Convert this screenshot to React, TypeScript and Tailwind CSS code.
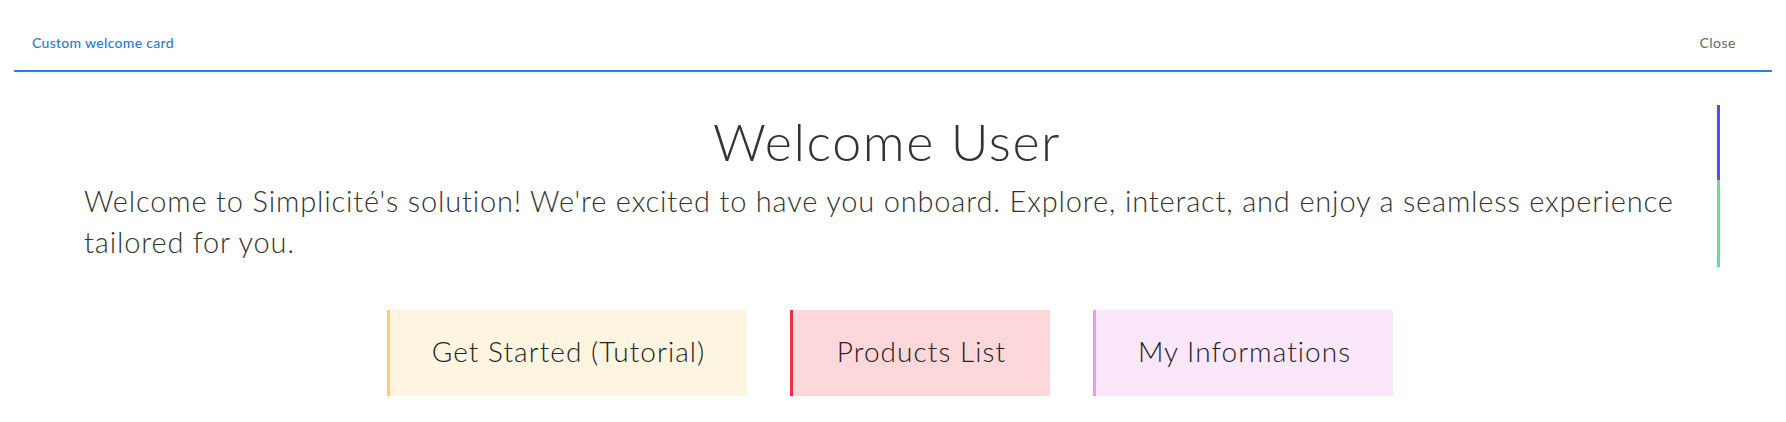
import React from 'react';

const actions = [
  { label: 'Get Started (Tutorial)', cls: 'bg-[#fef5e0] border-[#fecd63] w-[360px]' },
  { label: 'Products List', cls: 'bg-[#fdd7d9] border-[#ee3039] w-[260px]' },
  { label: 'My Informations', cls: 'bg-[#fbe7fa] border-[#e8a0ea] w-[300px]' },
];

const App = () => {
  return (
    <div className="w-full h-[422px] bg-white font-['Lato','Open_Sans',sans-serif] overflow-hidden">
      {/* card header */}
      <div className="mx-[14px] h-[72px] flex items-center justify-between border-b-2 border-[#2a7fd6]">
        <span className="pl-[18px] pt-[14px] text-[14px] tracking-[0.3px] font-medium text-[#2a7ad8]">Custom welcome card</span>
        <span className="pr-[36px] pt-[14px] text-[14px] tracking-[0.5px] text-[#666]">Close</span>
      </div>

      <div className="flex pl-[84px] pr-[66px] pt-[33px]">
        <div className="flex-1 pr-[27px]">
          <h1 className="mt-[5px] text-center text-[52px] leading-[62px] tracking-[1.6px] font-light text-[#333]">Welcome User</h1>
          <p className="pt-[8px] text-[29px] leading-[41px] tracking-[0.83px] font-light text-[#333]">
            Welcome to Simplicité's solution! We're excited to have you onboard. Explore, interact, and enjoy a seamless experience tailored for you.
          </p>
        </div>
        <div className="w-[3px] flex flex-col">
          <div className="h-[75px] bg-[#4f4ff2]" />
          <div className="h-[87px] bg-[#5de397]" />
        </div>
      </div>

      <div className="flex justify-center gap-[43px] pt-[43px] pr-[6px]">
        {actions.map((a) => (
          <div
            key={a.label}
            className={`h-[86px] pb-[4px] border-l-[3px] flex items-center justify-center text-[28px] tracking-[1.05px] font-light text-[#222] ${a.cls}`}
          >
            {a.label}
          </div>
        ))}
      </div>
    </div>
  );
};

export default App;
